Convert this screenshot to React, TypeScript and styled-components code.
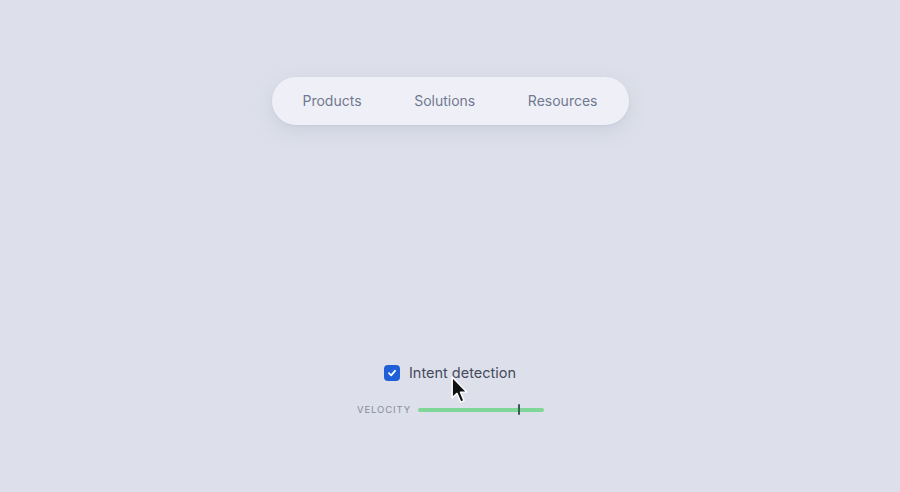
import React from 'react'
import styled, { createGlobalStyle } from 'styled-components'

const Global = createGlobalStyle`
    html, body {
        margin:0;
        padding:0;
        background:#dde0ea;
        font-family:Inter, "Noto Sans", sans-serif;
    }
`;

const Page = styled.div`
    display:flex;
    flex-direction:column;
    align-items:center;
    height:492px;
    padding-top:77px;
    box-sizing:border-box;
`;

const Nav = styled.nav`
    display:flex;
    align-items:center;
    justify-content:space-between;
    width:357px;
    height:48px;
    box-sizing:border-box;
    padding:0 31px 1px;
    border-radius:24px;
    background:#eff0f7;
    box-shadow:0 6px 18px rgba(150,158,185,.25), 0 1px 2px rgba(150,158,185,.15);
`;

const NavItem = styled.a`
    font-size:14px;
    color:#717890;
    cursor:pointer;
`;

const Controls = styled.div`
    display:flex;
    flex-direction:column;
    align-items:center;
    gap:23px;
    margin-top:239px;
    position:relative;
`;

const CheckRow = styled.label`
    display:flex;
    align-items:center;
    gap:9px;
    font-size:14.5px;
    color:#454b5d;
`;

const Box = styled.span`
    display:flex;
    align-items:center;
    justify-content:center;
    width:16px;
    height:16px;
    border-radius:4px;
    background:#1f5fd8;
`;

const SliderRow = styled.div`
    display:flex;
    align-items:center;
    gap:7px;
    margin-left:1px;
`;

const SliderLabel = styled.span`
    font-size:9.5px;
    letter-spacing:.9px;
    color:#868c9c;
`;

const Track = styled.div`
    position:relative;
    width:126px;
    height:4px;
    border-radius:2px;
    background:#7ed697;
`;

const Thumb = styled.span`
    position:absolute;
    top:-4px;
    width:2px;
    height:11px;
    border-radius:1px;
    background:#3d5a52;
`;

const Cursor = styled.svg`
    position:absolute;
    left:95px;
    top:12px;
    pointer-events:none;
`;

const App = () => {
    const value = 0.8;
    return <>
        <Global />
        <Page>
            <Nav>
                <NavItem>Products</NavItem>
                <NavItem>Solutions</NavItem>
                <NavItem>Resources</NavItem>
            </Nav>
            <Controls>
                <CheckRow>
                    <Box>
                        <svg width="10" height="10" viewBox="0 0 10 10">
                            <path d="M2 5.2 L4.2 7.3 L8 2.8" fill="none" stroke="#fff" strokeWidth="1.8" strokeLinecap="round" strokeLinejoin="round" />
                        </svg>
                    </Box>
                    Intent detection
                </CheckRow>
                <SliderRow>
                    <SliderLabel>VELOCITY</SliderLabel>
                    <Track>
                        <Thumb style={{ left: `${value * 126 - 1}px` }} />
                    </Track>
                </SliderRow>
                <Cursor width="18" height="29" viewBox="0 0 16 26">
                    <path d="M1 1 L1 19.5 L5.3 15.6 L8.6 23.4 L11.6 22.1 L8.4 14.5 L14 14.3 Z" fill="#111" stroke="#fff" strokeWidth="1.3" strokeLinejoin="round" />
                </Cursor>
            </Controls>
        </Page>
    </>
}
export default App
